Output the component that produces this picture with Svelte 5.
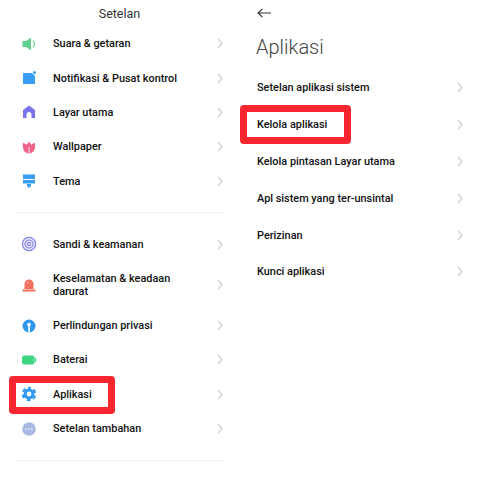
<script>
  const first = [
    { label: 'Suara & getaran', icon: 'sound' },
    { label: 'Notifikasi & Pusat kontrol', icon: 'notif' },
    { label: 'Layar utama', icon: 'home' },
    { label: 'Wallpaper', icon: 'tulip' },
    { label: 'Tema', icon: 'theme' }
  ];
  const second = [
    { label: 'Sandi & keamanan', icon: 'finger' },
    { label: 'Keselamatan & keadaan darurat', icon: 'alarm', tall: true },
    { label: 'Perlindungan privasi', icon: 'privacy' },
    { label: 'Baterai', icon: 'battery' },
    { label: 'Aplikasi', icon: 'gear', marked: true },
    { label: 'Setelan tambahan', icon: 'more' }
  ];
  const apps = [
    { label: 'Setelan aplikasi sistem' },
    { label: 'Kelola aplikasi', marked: true },
    { label: 'Kelola pintasan Layar utama' },
    { label: 'Apl sistem yang ter-unsintal' },
    { label: 'Perizinan' },
    { label: 'Kunci aplikasi' }
  ];
</script>

{#snippet icon(name)}
  <svg class="icon" viewBox="0 0 16 16" width="16" height="16">
    {#if name === 'sound'}
      <path d="M1.500 5h3.500l5-3.500v13L5 11H1.500z" fill="#5fd28f" />
      <path d="M12 4.500c1.500 2 1.500 5 0 7" fill="none" stroke="#5fd28f" stroke-width="1.100" />
    {:else if name === 'notif'}
      <path d="M2 3h9l3 3v8H2z" fill="#3a9df5" />
      <circle cx="13.500" cy="2.500" r="1.500" fill="#3a9df5" />
    {:else if name === 'home'}
      <path d="M8 1.500 14 6v8h-3.500v-3.500a2.500 2.500 0 0 0-5 0V14H2V6z" fill="#7a74ee" />
    {:else if name === 'tulip'}
      <path d="M2 4c2 0 3 1 3.500 2L8 2.500 10.500 6c.5-1 1.500-2 3.500-2 .6 5-.8 10.500-6 10.500S1.400 9 2 4z" fill="#f0638a" />
      <path d="M8 8v6.500" stroke="#fff" stroke-width=".8" />
    {:else if name === 'theme'}
      <rect x="2" y="1.500" width="12" height="4.500" fill="#3a9df5" />
      <rect x="2" y="7" width="12" height="3.500" fill="#3a9df5" />
      <path d="M6 11h4v2l-2 2-2-2z" fill="#3a9df5" />
    {:else if name === 'finger'}
      <circle cx="8" cy="8" r="6.600" fill="#eceafc" stroke="#8a86ea" stroke-width="1.300" />
      <circle cx="8" cy="8" r="4" fill="none" stroke="#8a86ea" stroke-width="1.200" />
      <circle cx="8" cy="8" r="1.600" fill="none" stroke="#8a86ea" stroke-width="1.200" />
    {:else if name === 'alarm'}
      <path d="M3.500 12V7a4.500 4.500 0 0 1 9 0v5z" fill="#f4705c" />
      <rect x="1.500" y="12.500" width="13" height="2" fill="#f4705c" />
      <path d="M6 7a2 2 0 0 1 2-2" fill="none" stroke="#fbc2b8" stroke-width="1" />
    {:else if name === 'privacy'}
      <circle cx="8" cy="8" r="6.500" fill="#2f97ee" />
      <circle cx="8" cy="6.500" r="1.800" fill="#fff" />
      <rect x="7.200" y="7" width="1.600" height="7.500" fill="#fff" />
    {:else if name === 'battery'}
      <rect x="1" y="3.500" width="12.500" height="9" rx="2" fill="#3fd486" />
      <rect x="14" y="6" width="1.200" height="4" fill="#3fd486" />
    {:else if name === 'gear'}
      <circle cx="8" cy="8" r="5.400" fill="#2f97ee" />
      <circle cx="8" cy="8" r="6.200" fill="none" stroke="#2f97ee" stroke-width="2.200" stroke-dasharray="3.600 2.890" stroke-dashoffset="1.800" transform="rotate(-90 8 8)" />
      <circle cx="8" cy="8" r="2.400" fill="#fff" />
    {:else if name === 'more'}
      <circle cx="8" cy="8" r="6.800" fill="#aab8e6" />
      <circle cx="5.200" cy="8" r=".8" fill="#fff" />
      <circle cx="8" cy="8" r=".8" fill="#fff" />
      <circle cx="10.800" cy="8" r=".8" fill="#fff" />
    {/if}
  </svg>
{/snippet}

{#snippet chevron()}
  <svg class="chevron" viewBox="0 0 6 11" width="6" height="11">
    <path d="M1 1l4 4.500-4 4.500" fill="none" stroke="#cfcfcf" stroke-width="1.200" />
  </svg>
{/snippet}

{#snippet settingRow(item)}
  <div class="row" class:tall={item.tall}>
    {@render icon(item.icon)}
    <span class="label">{item.label}</span>
    {@render chevron()}
    {#if item.marked}<div class="mark"></div>{/if}
  </div>
{/snippet}

<div class="page">
  <section class="left">
    <h1 class="head">Setelan</h1>
    <div class="group">
      {#each first as item}
        {@render settingRow(item)}
      {/each}
    </div>
    <hr />
    <div class="group">
      {#each second as item}
        {@render settingRow(item)}
      {/each}
    </div>
    <hr />
  </section>

  <section class="right">
    <svg class="back" viewBox="0 0 14 10" width="14" height="10">
      <path d="M14 5H1M5.500.8 1 5l4.500 4.200" fill="none" stroke="#333" stroke-width="1.100" />
    </svg>
    <h2 class="title">Aplikasi</h2>
    <div class="list">
      {#each apps as item}
        <div class="app-row">
          <span class="label">{item.label}</span>
          {@render chevron()}
          {#if item.marked}<div class="mark wide"></div>{/if}
        </div>
      {/each}
    </div>
  </section>
</div>

<style>
  :global(body) {
    background: #fff;
  }

  .page {
    display: grid;
    grid-template-columns: 240px 240px;
    width: 480px;
    height: 480px;
    overflow: hidden;
    font-family: Roboto, "Liberation Sans", sans-serif;
    color: #111;
  }

  .left {
    padding: 0 17px 0 16px;
  }

  .head {
    margin: 0;
    height: 26.500px;
    line-height: 28px;
    font-size: 12.500px;
    font-weight: 400;
    text-align: center;
    color: #333;
  }

  .group {
    display: flex;
    flex-direction: column;
  }

  .row {
    position: relative;
    display: flex;
    align-items: center;
    height: 34.400px;
  }

  .row.tall {
    height: 47px;
  }

  .icon {
    flex: none;
    margin-left: 5px;
    margin-right: 16px;
  }

  .label {
    flex: 1;
    font-size: 10.900px;
    font-weight: 500;
    line-height: 13px;
  }

  .tall .label {
    padding-right: 40px;
  }

  .chevron {
    flex: none;
  }

  .mark {
    position: absolute;
    left: -7px;
    top: -1px;
    width: 106px;
    height: 38px;
    box-sizing: border-box;
    border: 7px solid #f8262f;
    border-radius: 4px;
  }

  hr {
    margin: 14px 0 13.500px;
    border: 0;
    height: 1px;
    background: #f1f1f1;
  }

  .right {
    display: flex;
    flex-direction: column;
    padding: 8px 17px 0 17px;
  }

  .title {
    margin: 16px 0 0 -1px;
    font-size: 20px;
    font-weight: 300;
    line-height: 26px;
    color: #444;
  }

  .list {
    display: flex;
    flex-direction: column;
    margin-top: 9.500px;
  }

  .app-row {
    position: relative;
    display: flex;
    align-items: center;
    height: 36.800px;
  }

  .mark.wide {
    left: -17px;
    top: -1px;
    width: 111px;
    height: 39px;
  }
</style>
